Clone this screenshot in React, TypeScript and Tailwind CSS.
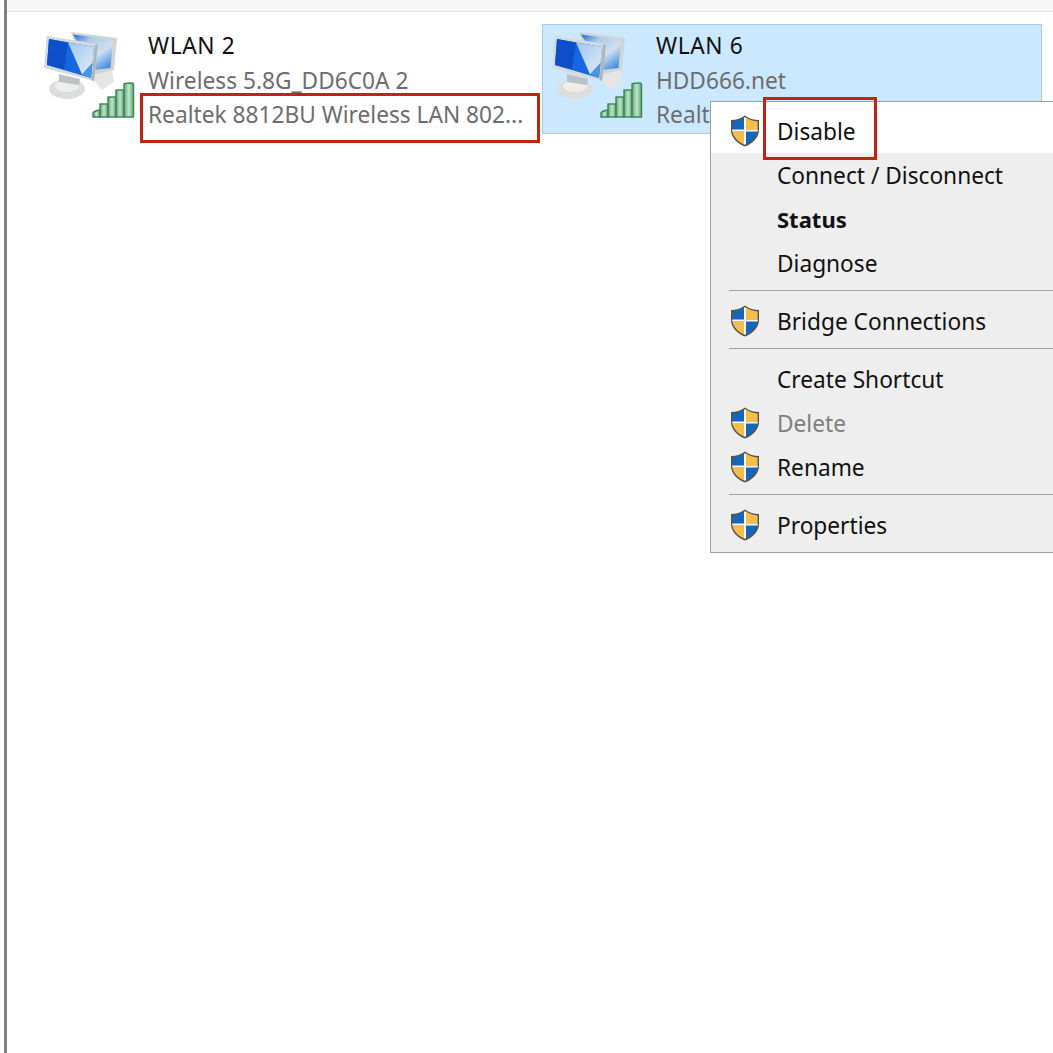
import React from 'react'

const font = "font-['Noto_Sans','Open_Sans',sans-serif]"

function ShieldIcon() {
  return (
    <svg width="30" height="32" viewBox="0 0 30 32" className="block">
      <path d="M15 0.5 C11 3.5 6 5 1 5 L1 15 C1 23 8 29 15 31.5 C22 29 29 23 29 15 L29 5 C24 5 19 3.5 15 0.5 Z" fill="#55534a" />
      <path d="M14 2.6 C10.5 5 6.6 6.3 2.4 6.5 L2.4 14.6 L14 14.6 Z" fill="#1467b8" />
      <path d="M16 2.6 C19.5 5 23.4 6.3 27.6 6.5 L27.6 14.6 L16 14.6 Z" fill="#f6bd4a" />
      <path d="M2.5 16.4 L14 16.4 L14 29.4 C8.5 27 3.4 22.4 2.5 16.4 Z" fill="#f6bd4a" />
      <path d="M27.5 16.4 L16 16.4 L16 29.4 C21.5 27 26.6 22.4 27.5 16.4 Z" fill="#1467b8" />
      <path d="M14 2.4 L16 2.4 L16 14.6 L27.8 14.6 L27.8 16.4 L16 16.4 L16 29.6 L14 29.6 L14 16.4 L2.2 16.4 L2.2 14.6 L14 14.6 Z" fill="#f7f7f2" />
    </svg>
  )
}

function NetworkIcon() {
  return (
    <svg width="94" height="92" viewBox="0 0 94 92" className="block">
      <defs>
        <linearGradient id="frontGlare" x1="0" y1="0" x2="1" y2="1">
          <stop offset="0" stopColor="#9cc6f0" />
          <stop offset="1" stopColor="#e3edf6" />
        </linearGradient>
        <linearGradient id="backScreen" x1="0" y1="0" x2="0.8" y2="1">
          <stop offset="0" stopColor="#1f66d0" />
          <stop offset="0.3" stopColor="#a9cbec" />
          <stop offset="0.65" stopColor="#cfe0f0" />
          <stop offset="1" stopColor="#3d8ce0" />
        </linearGradient>
        <linearGradient id="bar" x1="0" y1="0" x2="1" y2="0">
          <stop offset="0" stopColor="#5ea577" />
          <stop offset="0.5" stopColor="#bfe6c8" />
          <stop offset="1" stopColor="#5ea577" />
        </linearGradient>
      </defs>
      <g className="blur-[0.5px]">
        {/* back monitor */}
        <path d="M29 0 L75 6 L72 38 L52 46 L40 30 Z" fill="#cfd4d7" />
        <path d="M31 2.5 L71 8 L68.5 36 L52 38 L42 20 Z" fill="url(#backScreen)" />
        <path d="M48 44 L70 38 L72 50 L60 58 Z" fill="#e4e6e5" />
        {/* stand */}
        <ellipse cx="25" cy="57" rx="18" ry="10" fill="#dcdedd" />
        <ellipse cx="25" cy="54" rx="12" ry="6" fill="#eeeeed" />
        <path d="M17 42 L38 47 L37 53 L17 50 Z" fill="#bcc1c3" />
        {/* front monitor */}
        <path d="M4.5 4 L56 12 L52 49 L2 36 Z" fill="#d4d9dc" />
        <path d="M7 7 L52 15 L49 46 L5 33 Z" fill="#1566e0" />
        <path d="M7 7 L26 10.5 L22 37.5 L5 33 Z" fill="#0c4fc8" />
        <path d="M26 10.5 L52 15 L50.5 31 L40 42.5 Z" fill="url(#frontGlare)" />
        <path d="M50.5 31 L49 46 L40 42.5 Z" fill="#4a95e6" />
        <path d="M53 13 L56 12 L52 49 L49.5 48 Z" fill="#aeb5ba" />
      </g>
      {/* signal bars */}
      <g stroke="#3d8457" strokeWidth="1.4" fill="url(#bar)">
        <path d="M51 85 L51 81 Q52 79 58 78 L58 85 Z" />
        <rect x="58" y="72" width="8" height="13" />
        <rect x="66" y="65" width="8" height="20" />
        <rect x="74" y="58" width="8" height="27" />
        <path d="M82 85 L82 52 Q84 51 90 51 Q91.5 51 91.5 53 L91.5 85 Z" />
      </g>
    </svg>
  )
}

function Tile({ name, line1, line2, selected }: { name: string; line1: string; line2: string; selected?: boolean }) {
  return (
    <div className={`flex w-[500px] h-[110px] border ${selected ? 'bg-[#cce8ff] border-[#a9cde8]' : 'border-transparent'}`}>
      <div className="ml-[7px] mt-[7px] w-[106px] shrink-0">
        <NetworkIcon />
      </div>
      <div className="pt-[3px] min-w-0 text-[22.7px] leading-[35px] whitespace-nowrap">
        <div className="text-[#111] tracking-[0.6px]">{name}</div>
        <div className="text-[#6d6d6d]">{line1}</div>
        <div className="text-[#6d6d6d] -mt-px">{line2}</div>
      </div>
    </div>
  )
}

function MenuItem({ label, shield, bold, disabled }: { label: string; shield?: boolean; bold?: boolean; disabled?: boolean }) {
  return (
    <div className="flex items-center h-[44px]">
      <div className="w-[66px] pl-[19px] shrink-0">{shield && <ShieldIcon />}</div>
      <span className={`${bold ? 'font-bold text-[22px]' : 'pt-[2px]'} ${disabled ? 'text-[#7f7f7f]' : 'text-[#111]'}`}>{label}</span>
    </div>
  )
}

function Separator() {
  return (
    <div className="h-[14px] pt-[5px] pl-[18px]">
      <div className="h-px bg-[#a0a0a0]" />
    </div>
  )
}

export default function App() {
  return (
    <div className={`relative w-[1053px] h-[1053px] overflow-hidden bg-white ${font}`}>
      <div className="h-[12px] ml-[6px] bg-[#f6f7f6] border-b border-[#e4e6e6]" />
      <div className="absolute left-[4px] top-0 bottom-0 w-[3px] bg-[#808080]" />

      <div className="flex gap-[8px] pl-[34px] pt-[12px]">
        <Tile name="WLAN 2" line1="Wireless 5.8G_DD6C0A 2" line2="Realtek 8812BU Wireless LAN 802..." />
        <Tile name="WLAN 6" line1="HDD666.net" line2="Realtek 8812BU Wireless LAN 802..." selected />
      </div>

      {/* context menu */}
      <div className="absolute left-[710px] top-[101px] w-[360px] h-[452px] bg-[#eeeeee] border border-[#a0a0a0] text-[22.7px]">
        <div className="bg-white pt-[7px]">
          <MenuItem label="Disable" shield />
        </div>
        <MenuItem label="Connect / Disconnect" />
        <MenuItem label="Status" bold />
        <MenuItem label="Diagnose" />
        <Separator />
        <MenuItem label="Bridge Connections" shield />
        <Separator />
        <MenuItem label="Create Shortcut" />
        <MenuItem label="Delete" shield disabled />
        <MenuItem label="Rename" shield />
        <Separator />
        <MenuItem label="Properties" shield />
      </div>

      {/* red annotation boxes */}
      <div className="absolute left-[140px] top-[93px] w-[400px] h-[50px] border-[3px] border-[#c0260f]" />
      <div className="absolute left-[763px] top-[97px] w-[114px] h-[63px] border-[3px] border-[#c0260f]" />
    </div>
  )
}
